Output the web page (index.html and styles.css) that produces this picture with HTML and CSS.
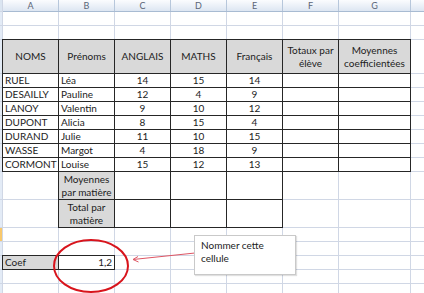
FILE: index.html
```html
<!DOCTYPE html>
<html lang="fr">
<head>
<meta charset="utf-8">
<title>Feuille de notes</title>
<link rel="stylesheet" href="styles.css">
</head>
<body>
<div class="sheet">
  <div class="rh rh-top"></div><div class="ch">A</div><div class="ch">B</div><div class="ch">C</div><div class="ch">D</div><div class="ch">E</div><div class="ch">F</div><div class="ch">G</div><div class="ch"></div>

  <div class="rh"></div><div class="c"></div><div class="c"></div><div class="c"></div><div class="c"></div><div class="c"></div><div class="c"></div><div class="c"></div><div class="c"></div>
  <div class="rh"></div><div class="c"></div><div class="c"></div><div class="c"></div><div class="c"></div><div class="c"></div><div class="c"></div><div class="c"></div><div class="c"></div>

  <div class="rh"></div><div class="c b g ctr">NOMS</div><div class="c b g ctr">Prénoms</div><div class="c b g ctr">ANGLAIS</div><div class="c b g ctr">MATHS</div><div class="c b g ctr">Français</div><div class="c b g wrap">Totaux par élève</div><div class="c b g wrap">Moyennes coefficientées</div><div class="c"></div>

  <div class="rh"></div><div class="c b">RUEL</div><div class="c b">Léa</div><div class="c b ctr">14</div><div class="c b ctr">15</div><div class="c b ctr">14</div><div class="c b"></div><div class="c b"></div><div class="c"></div>
  <div class="rh"></div><div class="c b">DESAILLY</div><div class="c b">Pauline</div><div class="c b ctr">12</div><div class="c b ctr">4</div><div class="c b ctr">9</div><div class="c b"></div><div class="c b"></div><div class="c"></div>
  <div class="rh"></div><div class="c b">LANOY</div><div class="c b">Valentin</div><div class="c b ctr">9</div><div class="c b ctr">10</div><div class="c b ctr">12</div><div class="c b"></div><div class="c b"></div><div class="c"></div>
  <div class="rh"></div><div class="c b">DUPONT</div><div class="c b">Alicia</div><div class="c b ctr">8</div><div class="c b ctr">15</div><div class="c b ctr">4</div><div class="c b"></div><div class="c b"></div><div class="c"></div>
  <div class="rh"></div><div class="c b">DURAND</div><div class="c b">Julie</div><div class="c b ctr">11</div><div class="c b ctr">10</div><div class="c b ctr">15</div><div class="c b"></div><div class="c b"></div><div class="c"></div>
  <div class="rh"></div><div class="c b">WASSE</div><div class="c b">Margot</div><div class="c b ctr">4</div><div class="c b ctr">18</div><div class="c b ctr">9</div><div class="c b"></div><div class="c b"></div><div class="c"></div>
  <div class="rh"></div><div class="c b">CORMONT</div><div class="c b">Louise</div><div class="c b ctr">15</div><div class="c b ctr">12</div><div class="c b ctr">13</div><div class="c b"></div><div class="c b"></div><div class="c"></div>

  <div class="rh"></div><div class="c"></div><div class="c b g wrap">Moyennes par matière</div><div class="c b"></div><div class="c b"></div><div class="c b"></div><div class="c"></div><div class="c"></div><div class="c"></div>
  <div class="rh"></div><div class="c"></div><div class="c b g wrap">Total par matière</div><div class="c b"></div><div class="c b"></div><div class="c b"></div><div class="c"></div><div class="c"></div><div class="c"></div>

  <div class="rh rh-sel"></div><div class="c"></div><div class="c"></div><div class="c"></div><div class="c"></div><div class="c"></div><div class="c"></div><div class="c"></div><div class="c"></div>
  <div class="rh"></div><div class="c"></div><div class="c"></div><div class="c"></div><div class="c"></div><div class="c"></div><div class="c"></div><div class="c"></div><div class="c"></div>
  <div class="rh"></div><div class="c b g">Coef</div><div class="c b r">1,2</div><div class="c"></div><div class="c"></div><div class="c"></div><div class="c"></div><div class="c"></div><div class="c"></div>
  <div class="rh"></div><div class="c"></div><div class="c"></div><div class="c"></div><div class="c"></div><div class="c"></div><div class="c"></div><div class="c"></div><div class="c"></div>
  <div class="rh"></div><div class="c"></div><div class="c"></div><div class="c"></div><div class="c"></div><div class="c"></div><div class="c"></div><div class="c"></div><div class="c"></div>
</div>

<svg class="ellipse" width="90" height="60" viewBox="0 0 90 60" aria-hidden="true">
  <ellipse cx="41" cy="30" rx="37" ry="26" fill="none" stroke="#d8141c" stroke-width="2"/>
</svg>

<svg class="arrow" width="66" height="14" viewBox="0 0 66 14" aria-hidden="true">
  <path d="M64 3 L2 9.5 M2 9.5 L7 6.5 M2 9.5 L7.5 12" fill="none" stroke="#de5563" stroke-width="1"/>
</svg>

<div class="callout">Nommer cette cellule</div>
</body>
</html>
```

FILE: styles.css
```css
html, body {
  margin: 0;
  padding: 0;
  width: 424px;
  height: 293px;
  overflow: hidden;
  background: #fff;
}

body {
  position: relative;
  font-family: Lato, "Liberation Sans", sans-serif;
  font-size: 10px;
  color: #1c1c1c;
}

.sheet {
  display: grid;
  grid-template-columns: 2px repeat(6, 55px) 71px 1fr;
  grid-template-rows: 11px 13px 13px 33px repeat(7, 13px) 27px 27px repeat(5, 13px);
  gap: 1px;
  background: #d0d7e5;
  width: 424px;
  height: 300px;
}

.rh {
  background: #e3ebf6;
}

.rh-top {
  background: #dbe5f1;
}

.rh-sel {
  background: #f8c86c;
}

.ch {
  background: linear-gradient(#fbfcfe, #dde6f2);
  box-shadow: 1px 0 0 #b7c7db, 0 1px 0 #a8bbd2, 1px 1px 0 #a8bbd2;
  color: #5a6577;
  font-size: 9px;
  line-height: 11px;
  text-align: center;
}

.c {
  background: #fff;
  display: flex;
  align-items: center;
  padding: 0 2px;
  white-space: nowrap;
  overflow: hidden;
  line-height: 13px;
}

.b {
  box-shadow: 0 0 0 1px #262626;
  overflow: visible;
}

.g {
  background: #d9d9d9;
}

.ctr {
  justify-content: center;
}

.r {
  justify-content: flex-end;
}

.wrap {
  white-space: normal;
  text-align: center;
  justify-content: center;
  padding: 0 1px;
}

.ellipse {
  position: absolute;
  left: 50px;
  top: 236px;
}

.arrow {
  position: absolute;
  left: 131px;
  top: 250px;
}

.callout {
  position: absolute;
  left: 194px;
  top: 235px;
  width: 88px;
  height: 32px;
  padding: 3px 6px 3px 6px;
  background: #fff;
  border: 1px solid #c9c9c9;
  box-shadow: 1px 1px 1px rgba(0, 0, 0, 0.12);
  line-height: 13px;
}
```
